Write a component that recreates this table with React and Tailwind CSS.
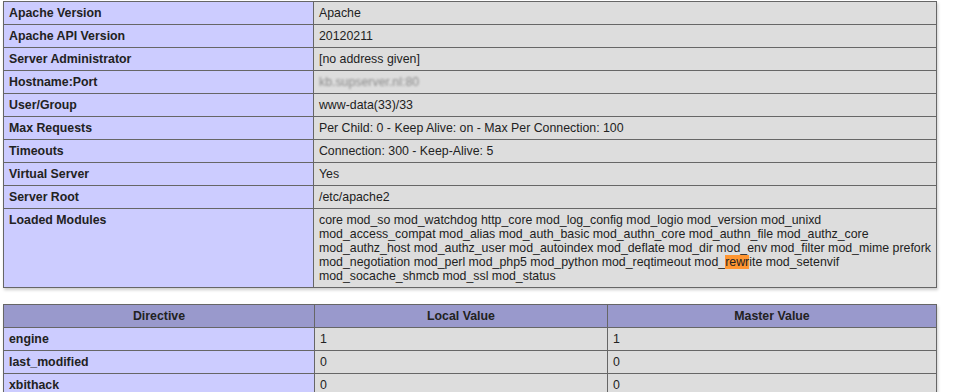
const serverRows = [
  ['Apache Version', 'Apache'],
  ['Apache API Version', '20120211'],
  ['Server Administrator', '[no address given]'],
  ['Hostname:Port', null],
  ['User/Group', 'www-data(33)/33'],
  ['Max Requests', 'Per Child: 0 - Keep Alive: on - Max Per Connection: 100'],
  ['Timeouts', 'Connection: 300 - Keep-Alive: 5'],
  ['Virtual Server', 'Yes'],
  ['Server Root', '/etc/apache2'],
];

const moduleLines = [
  'core mod_so mod_watchdog http_core mod_log_config mod_logio mod_version mod_unixd',
  'mod_access_compat mod_alias mod_auth_basic mod_authn_core mod_authn_file mod_authz_core',
  'mod_authz_host mod_authz_user mod_autoindex mod_deflate mod_dir mod_env mod_filter mod_mime prefork',
];

const directives = [
  ['engine', '1', '1'],
  ['last_modified', '0', '0'],
  ['xbithack', '0', '0'],
];

const cell = 'border border-[#666] px-[5px] py-[4px] align-baseline text-[12.35px] leading-[14px] text-[#222]';
const keyCell = `${cell} bg-[#ccf] font-bold w-[311px]`;
const valCell = `${cell} bg-[#ddd]`;

export default function App() {
  return (
    <div className="min-h-screen bg-white pl-[3px] pt-px font-['Liberation_Sans',Arial,sans-serif]">
      <table className="w-[934px] border-collapse shadow-[1px_2px_3px_#ccc]">
        <tbody>
          {serverRows.map(([k, v]) => (
            <tr key={k}>
              <td className={keyCell}>{k}</td>
              <td className={valCell}>
                {v ?? (
                  <span className="inline-block text-[#8a8a8a] blur-[1px]">kb.supserver.nl:80</span>
                )}
              </td>
            </tr>
          ))}
          <tr>
            <td className={keyCell}>Loaded Modules</td>
            <td className={valCell}>
              {moduleLines.map((line) => (
                <div key={line} className="whitespace-nowrap">{line}</div>
              ))}
              <div className="whitespace-nowrap">
                mod_negotiation mod_perl mod_php5 mod_python mod_reqtimeout mod_
                <span className="bg-[#ff9632]">rewr</span>ite mod_setenvif
              </div>
              <div>mod_socache_shmcb mod_ssl mod_status</div>
            </td>
          </tr>
        </tbody>
      </table>

      <table className="mt-[16px] w-[934px] border-collapse shadow-[1px_2px_3px_#ccc]">
        <thead>
          <tr>
            <th className={`${cell} w-[311px] bg-[#99c] font-bold text-center`}>Directive</th>
            <th className={`${cell} w-[293px] bg-[#99c] font-bold text-center`}>Local Value</th>
            <th className={`${cell} bg-[#99c] font-bold text-center`}>Master Value</th>
          </tr>
        </thead>
        <tbody>
          {directives.map(([name, local, master]) => (
            <tr key={name}>
              <td className={keyCell}>{name}</td>
              <td className={valCell}>{local}</td>
              <td className={valCell}>{master}</td>
            </tr>
          ))}
        </tbody>
      </table>
    </div>
  );
}
